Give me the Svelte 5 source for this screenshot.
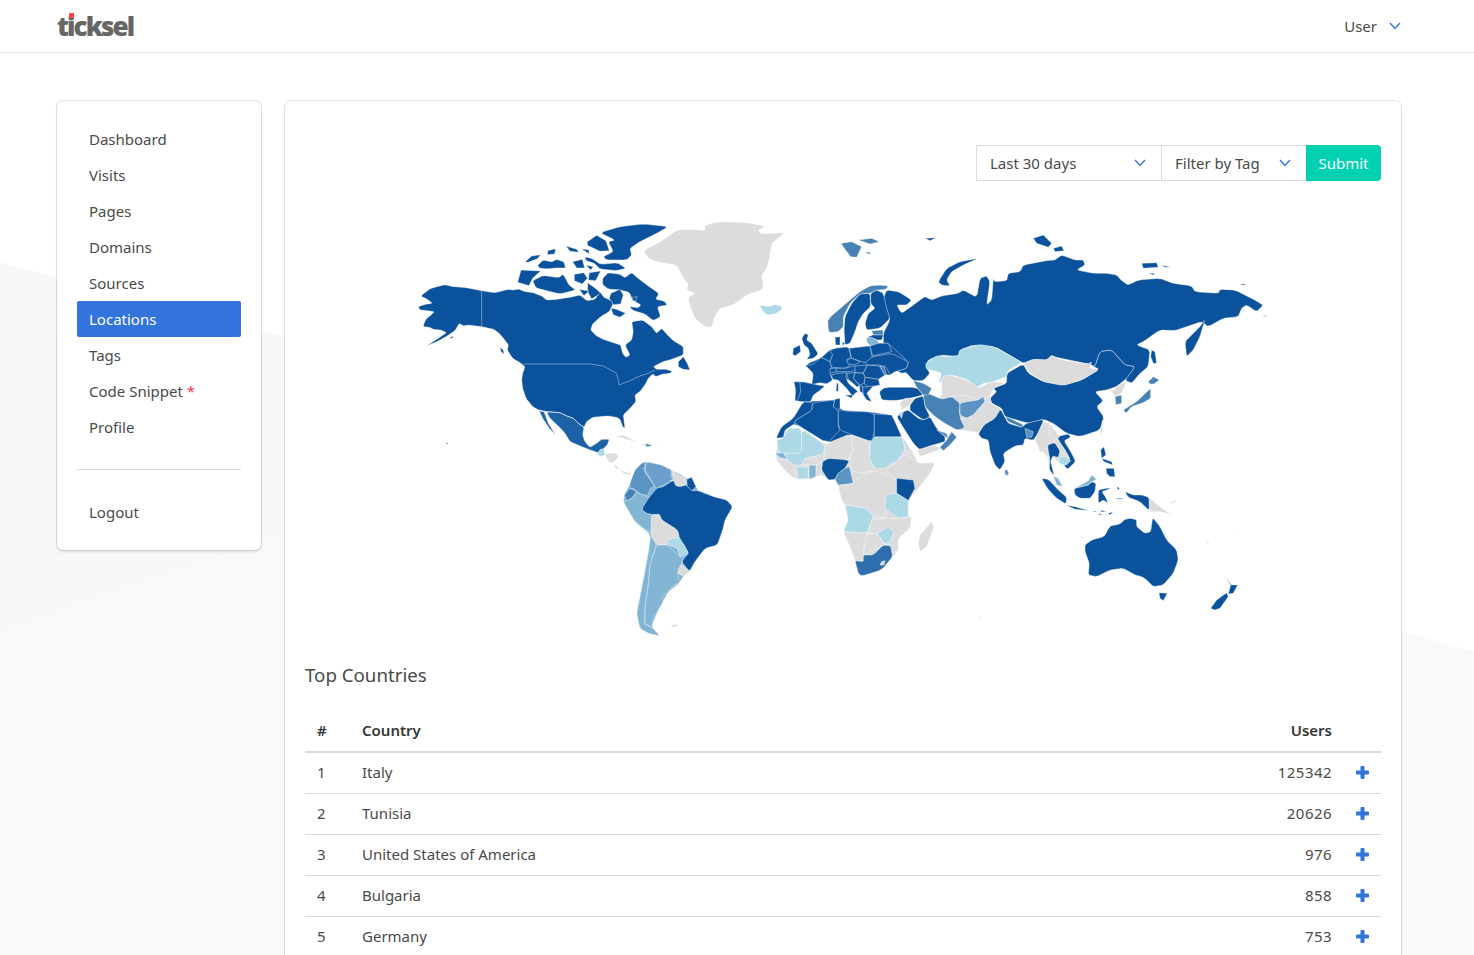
<script lang="ts">
	const colors = {
		d: '#0a529c',
		x: '#1d62a6',
		z: '#2e6ead',
		s: '#4682b4',
		m: '#5b93c3',
		v: '#6aa0cb',
		p: '#82b4d4',
		l: '#add8e6',
		g: '#dcdcdc'
	}

	// each region's points are in its own 3x grid, placed on the page at x,y
	const regions = [
		{
			x: 400, y: 210,
			shapes: [
				['g', '730,122 790,90 830,60 870,58 915,62 915,45 960,35 1040,38 1095,48 1075,62 1085,72 1155,68 1135,85 1115,100 1110,140 1100,175 1085,195 1090,225 1085,240 1040,255 1000,285 960,295 945,320 935,352 915,350 885,325 868,285 865,262 885,250 860,240 865,222 850,205 830,165 770,155 745,145'],
				['l', '1078,285 1105,290 1125,283 1145,290 1145,300 1125,312 1100,315 1090,305'],
				['d', '245,242 215,236 190,232 160,230 135,224 110,230 90,236 62,258 82,268 97,280 75,283 55,290 60,300 80,302 103,305 90,318 80,325 72,340 70,350 88,352 100,358 122,360 140,368 125,378 100,395 78,408 105,398 135,382 165,362 178,340 190,348 205,345 245,350 265,355 280,358 295,368 310,385 325,405 322,420 338,445 360,458 375,470 368,490 365,510 368,535 378,565 398,590 415,600 440,605 480,608 500,618 520,625 535,640 552,652 560,635 578,622 600,620 625,618 650,622 660,628 668,650 675,655 672,630 670,615 690,595 708,575 705,555 720,545 738,520 745,505 758,492 768,500 790,492 810,490 782,505 800,495 818,485 800,478 770,478 760,470 790,455 815,448 850,435 850,410 820,392 800,372 785,355 770,370 755,350 728,330 695,335 700,365 695,390 675,405 690,435 678,442 668,430 662,405 640,398 615,390 590,378 572,360 578,342 602,320 628,305 640,280 630,270 612,262 600,245 585,268 560,272 540,255 510,262 470,268 440,270 425,258 400,248 375,245 355,237 340,240 325,238 285,248'],
				['d', '600,68 660,50 730,42 805,50 770,70 720,95 690,115 695,135 680,150 620,150 610,140 640,125 625,95 645,90'],
				['d', '562,95 590,76 618,92 628,122 600,124 562,106'],
				['d', '498,108 530,118 537,127 510,124'],
				['d', '545,116 567,120 567,132'],
				['d', '375,156 395,138 422,134 412,146 385,157'],
				['d', '443,122 467,116 464,132 443,134'],
				['d', '413,166 430,150 455,156 470,148 492,156 497,174 465,174 440,177 418,174'],
				['d', '518,155 547,148 554,174 530,174'],
				['d', '555,140 577,146 602,163 652,158 678,175 650,182 600,177 583,160 558,152'],
				['d', '558,165 580,170 572,180'],
				['d', '363,180 422,183 398,205 387,227 353,217'],
				['d', '398,212 430,196 475,203 490,193 507,225 527,240 480,252 440,242 408,234'],
				['d', '523,193 552,188 562,205 547,222 523,212'],
				['d', '568,188 602,183 587,212 565,210'],
				['d', '608,205 625,188 660,193 675,203 695,188 712,203 742,226 777,250 767,268 792,273 802,285 772,290 782,320 760,332 735,312 700,302 688,290 715,293 723,285 698,270 688,247 660,240 625,237 608,224'],
				['d', '633,250 660,238 670,255 662,282 640,284 628,265'],
				['d', '698,262 712,260 708,272 698,272'],
				['d', '633,295 650,298 677,310 660,322 640,314'],
				['d', '563,218 590,238 602,250 575,267 563,245'],
				['d', '538,238 567,243 552,257'],
				['d', '835,455 850,440 862,460 870,480 850,478 835,470'],
				['d', '300,412 310,420 312,432 303,425'],
				['d', '150,382 162,378 155,386'],
				['d', '138,698 143,699 143,703 139,703'],
				['x', '440,606 480,608 500,618 520,625 535,640 552,652 548,675 555,695 570,712 590,700 605,688 628,688 622,705 610,716 600,730 585,725 565,718 540,708 510,695 495,670 475,648 450,625'],
				['x', '418,603 432,605 445,640 467,675 448,655 428,625']
			],
			lines: [
				'245,242 245,350 265,355 280,358 295,368 310,385 325,405',
				'372,462 570,462 610,468 650,490 658,525 690,512 720,498 745,490 765,480',
				'415,600 440,605 480,608 500,618 520,625 535,640 552,652'
			]
		},
		{
			x: 580, y: 425,
			shapes: [
				['l', '52,85 62,72 72,72 75,90 60,95'],
				['g', '75,88 85,85 108,85 115,95 105,108 90,115 80,100'],
				['l', '100,118 108,122 118,135 108,130'],
				['g', '118,132 130,138 148,145 155,142 150,150 130,145'],
				['g', '105,33 130,30 150,40 165,48 178,55 155,47 130,40'],
				['s', '198,55 218,62 198,66'],
				['g', '185,58 198,55 198,66'],
				['l', '150,64 160,66 152,67'],
				['g', '228,64 238,65 230,66']
			]
		},
		{
			x: 580, y: 420,
			shapes: [
				// South America base
				['p', '150,190 165,150 185,130 200,125 275,150 325,175 348,200 355,212 400,230 440,240 458,260 435,300 428,330 412,375 375,385 345,425 328,455 310,468 298,490 265,515 235,570 215,620 240,648 205,640 180,625 170,580 178,540 205,400 212,345 165,305 130,245 133,225'],
				['m', '150,190 165,150 185,130 200,125 190,150 225,200 210,205 205,225 185,225 160,205 150,205'],
				['v', '200,125 245,135 275,150 272,170 280,180 250,195 230,205 225,200 195,150'],
				['g', '275,150 295,165 325,175 318,195 300,200 285,198 270,182 280,180'],
				['d', '320,178 335,172 348,200 335,212 322,200'],
				['s', '133,225 150,205 170,215 155,235 140,243'],
				['p', '130,245 140,243 155,235 170,218 190,225 210,235 185,268 200,280 215,285 215,340 190,325 165,305 150,280'],
				['d', '185,268 205,235 230,205 250,200 280,180 288,198 300,200 318,195 335,212 355,212 400,230 440,240 458,260 435,300 428,330 412,375 375,385 345,425 328,455 305,425 325,400 315,378 298,355 292,330 245,300 238,285 215,283 200,280'],
				['g', '215,285 238,282 245,300 292,330 298,352 265,358 262,375 230,375 212,345'],
				['l', '265,358 298,352 325,400 300,412 292,385 265,375'],
				['g', '295,440 305,432 330,455 310,468 292,460'],
				['p', '230,375 262,375 300,412 310,405 305,430 292,455 298,490 280,495 265,515 245,530 250,545 235,570 222,590 215,620 195,612 195,560 205,490 210,430'],
				['p', '212,345 230,375 210,430 205,490 195,560 192,612 215,622 240,648 205,640 180,625 170,580 178,540 188,490 205,400'],
				['g', '275,615 292,612 290,620 275,620'],
				// Africa, grey base first so the countries on it leave no gaps
				['g', '588,100 600,60 620,25 735,75 815,45 882,50 968,50 1000,100 1015,130 1065,128 1050,160 1015,205 985,240 985,290 995,290 990,325 955,355 955,390 938,410 905,450 845,468 835,460 825,422 810,380 790,335 805,300 795,255 785,240 775,200 765,178 745,180 725,165 688,178 655,178 630,165 610,145 590,120'],
				['l', '590,60 610,55 625,25 665,25 665,100 608,100 595,95'],
				['l', '665,25 735,75 730,100 700,110 675,115 665,135 640,135 620,120 615,100 665,100'],
				['p', '585,100 610,98 622,118 598,112'],
				['g', '590,120 622,118 640,135 650,178 630,165 610,145'],
				['l', '650,140 685,142 685,175 655,178'],
				['p', '687,135 708,135 708,170 688,178'],
				['g', '710,135 725,130 725,165 708,170'],
				['g', '665,135 675,115 700,110 725,125 710,135'],
				['g', '735,75 790,48 815,45 818,90 805,122 745,115 728,115 735,100'],
				['g', '815,45 868,70 870,110 885,150 845,160 815,152 808,122 818,90'],
				['d', '728,125 745,115 785,118 808,122 795,145 775,160 765,178 745,180 725,150'],
				['m', '765,178 775,160 795,145 808,140 820,190 775,195'],
				['l', '882,50 968,50 975,90 950,125 935,130 915,145 885,145 870,120 870,70'],
				['g', '968,50 1000,100 975,95'],
				['g', '950,125 975,100 1015,130 1065,128 1050,160 1015,205 985,240 1000,180 950,180 915,150'],
				['g', '885,150 950,180 948,220 915,265 915,295 880,290 860,265 795,255 785,240 775,200 820,190 835,175'],
				['d', '950,175 1000,180 1005,205 985,242 950,220'],
				['l', '918,225 950,220 985,242 985,290 955,295 915,265'],
				['l', '795,255 860,265 880,290 875,300 862,340 790,335 805,300'],
				['g', '862,340 875,300 915,295 955,295 995,290 990,325 955,355 955,390 925,405 932,375 915,372 890,340'],
				['l', '890,340 925,322 942,335 930,365 915,372'],
				['g', '790,335 862,340 895,345 850,375 850,425 825,422 810,380'],
				['g', '860,345 890,340 915,372 895,385 850,405'],
				['z', '850,405 880,405 910,375 932,378 938,410 905,450 845,468 835,460 825,422 850,425'],
				['g', '905,425 915,422 912,435 900,435'],
				['g', '1020,345 1055,305 1062,320 1040,380 1020,395 1015,370']
			]
		},
		{
			x: 760, y: 210,
			shapes: [
				['d', '380,240 415,245 455,270 440,285 410,285 425,310 460,285 480,270 495,260 515,270 545,258 595,250 610,240 650,262 660,205 680,198 690,215 680,285 695,270 700,205 705,215 740,212 745,190 780,185 790,165 860,152 885,150 905,135 945,150 970,150 975,165 950,180 1000,190 1040,190 1070,195 1085,212 1105,225 1135,210 1200,205 1240,220 1295,228 1305,245 1375,250 1380,238 1425,240 1480,268 1510,285 1490,305 1460,285 1445,295 1435,320 1390,325 1345,350 1325,335 1265,355 1245,362 1200,360 1150,395 1130,405 1170,420 1165,470 1140,490 1115,520 1095,510 1125,470 1095,465 1055,420 1020,425 1005,470 985,462 880,440 860,450 820,448 790,460 765,445 705,410 640,405 600,420 595,440 545,435 505,450 497,470 510,490 490,512 460,512 438,487 425,490 390,470 385,440 370,405 370,370 390,330 380,300 370,265'],
				['d', '1275,395 1300,370 1320,350 1335,328 1320,380 1300,420 1280,440'],
				['d', '1175,420 1185,425 1190,460 1180,460 1172,440'],
				['d', '535,215 560,175 600,155 655,145 610,165 575,185 560,210 570,228 545,225'],
				['d', '820,85 850,75 875,100 865,112 830,100'],
				['d', '880,115 905,108 912,122 885,125'],
				['d', '1145,160 1190,158 1195,172 1150,175'],
				['d', '1205,165 1232,172 1215,172'],
				['d', '1165,190 1185,190 1180,195'],
				['d', '1440,222 1460,222 1450,226'],
				['d', '1510,316 1525,320 1512,319'],
				['d', '495,85 528,83 510,92'],
				['s', '243,100 275,95 305,110 290,142 272,140 255,118'],
				['s', '295,90 335,85 358,95 330,102'],
				['s', '315,125 335,128 325,133'],
				['d', '790,462 805,490 850,515 910,525 965,510 1018,478 990,465 1005,470 1020,425 1055,420 1095,465 1125,470 1100,505 1070,530 1040,540 1005,545 1030,572 1010,590 1032,622 1020,660 960,680 920,670 880,640 850,628 805,640 770,630 735,620 725,595 695,580 690,565 710,545 700,535 740,520 740,490'],
				['g', '790,460 820,448 860,450 875,435 905,450 985,462 995,455 990,475 1018,478 965,510 910,527 850,515 810,490'],
				['g', '1055,545 1075,525 1100,515 1085,550 1065,560'],
				['s', '1065,560 1085,555 1085,580 1068,585'],
				['s', '1090,600 1130,575 1158,548 1172,535 1172,565 1150,578 1115,590 1098,610'],
				['s', '1165,515 1180,500 1198,510 1182,522 1170,522'],
				['g', '1028,630 1030,640 1022,680 1020,668'],
				['l', '497,460 530,437 555,440 595,437 600,420 660,403 705,412 765,445 785,458 745,480 740,500 700,515 670,520 650,535 625,510 575,495 560,500 535,520 545,490 515,480 500,478'],
				// grey base behind Central and South Asia
				['g', '490,555 545,565 545,505 560,495 650,535 695,518 702,535 690,562 695,580 725,598 705,625 670,645 660,668 590,660 555,640 495,590'],
				['g', '545,505 560,495 590,500 630,515 655,535 695,515 735,518 700,535 690,560 655,570 615,555 575,560 545,565'],
				['s', '490,555 505,550 545,568 575,560 600,580 598,615 615,655 590,660 555,640 525,620 495,590'],
				['m', '600,580 620,575 655,570 670,560 675,575 640,615 620,625 600,615'],
				['g', '640,615 675,575 695,580 725,598 705,625 670,645 660,668 605,660 615,650 600,625 620,625'],
				['d', '358,545 375,532 470,532 490,555 450,565 405,572 365,570'],
				['s', '460,512 490,520 515,535 505,555 490,555 470,532'],
				['d', '445,600 475,625 490,630 510,620 530,655 555,680 555,695 520,705 480,720 460,700 425,645 410,620 430,605'],
				['d', '465,565 490,558 495,590 510,620 490,630 450,602 450,585'],
				['g', '420,580 435,565 465,565 450,585 425,600'],
				['l', '415,610 430,605 425,625'],
				['g', '472,720 520,705 545,715 530,722 480,740'],
				['m', '530,660 560,670 565,685 555,680'],
				['s', '540,712 560,690 575,665 590,682 570,705 550,722'],
				['d', '655,672 672,645 705,625 722,597 735,622 745,640 785,652 800,640 852,628 838,665 822,688 815,690 795,685 790,705 765,708 730,730 735,755 720,780 705,765 690,725 685,690 665,685'],
				['s', '735,620 750,625 790,645 785,652 745,635'],
				['m', '795,655 820,665 815,682 800,682'],
				// North Africa base
				['d', '48,685 65,650 100,625 130,575 225,570 240,565 240,600 320,605 395,615 425,680 343,680 335,695 270,672 202,700 105,640 75,660 70,682'],
				['d', '48,685 65,650 100,625 130,575 158,578 155,602 105,632 105,640 75,660 70,682'],
				['d', '158,578 225,570 220,590 235,600 235,650 240,660 202,700 105,640 105,632 155,602'],
				['d', '225,568 240,565 240,595 232,600 220,590'],
				['d', '240,600 275,605 320,605 343,612 343,665 335,695 270,672 240,660 235,640 235,605'],
				['d', '343,612 395,615 405,635 425,680 343,680']
			]
		},
		{
			x: 780, y: 280,
			shapes: [
				// dark base under the mainland countries
				['d', '75,255 125,232 150,210 208,205 270,198 295,190 325,190 385,245 380,265 345,275 330,285 315,285 295,298 300,315 280,318 260,340 275,365 250,345 238,318 205,298 158,298 150,282'],
				['s', '143,118 210,60 240,35 270,18 300,15 325,18 318,28 290,30 270,40 240,42 210,70 190,110 190,140 175,155 150,158 145,150'],
				['d', '192,150 195,110 215,70 240,42 270,40 272,80 250,100 235,125 225,155 210,190 195,195'],
				['d', '272,40 290,30 310,40 320,85 330,115 300,145 260,150 255,130 265,100 285,85 272,70'],
				['s', '275,152 308,150 310,165 280,165'],
				['d', '262,172 278,165 310,165 305,180 292,180'],
				['p', '258,175 275,172 292,180 298,192 278,205 262,188'],
				['d', '75,160 85,165 80,180 95,190 115,222 100,235 80,238 90,225 85,205 72,195 65,175'],
				['d', '40,205 60,195 62,215 45,228 38,222'],
				['d', '165,172 180,170 180,195 167,195'],
				['d', '188,185 195,190 188,198'],
				['d', '75,255 95,255 108,245 125,232 150,245 155,262 150,282 158,300 140,312 118,308 95,315 100,280'],
				['d', '125,232 150,210 165,205 158,225 150,245'],
				['d', '42,305 65,305 115,315 135,318 115,335 100,345 92,365 65,365 45,362 47,330'],
				['d', '42,305 60,306 62,335 52,362 45,362 47,330'],
				['d', '150,212 165,205 205,200 213,230 200,240 212,255 195,265 155,262 150,245 158,225'],
				['d', '208,205 270,198 278,240 255,248 215,235'],
				['d', '200,240 215,235 240,245 225,255 205,252'],
				['d', '165,265 195,265 222,258 235,262 215,275 170,275'],
				['d', '150,265 170,265 168,275 150,280'],
				['d', '155,285 170,280 200,278 198,292 205,310 235,335 225,340 218,350 200,325 175,300 158,298'],
				['d', '170,310 175,310 175,335 168,332'],
				['d', '195,345 218,345 215,355'],
				['d', '225,258 262,255 250,280 225,278'],
				['d', '262,255 298,258 315,285 295,298 255,292 250,280'],
				['d', '278,230 335,220 385,245 380,265 345,275 330,285 320,262 298,255 262,255 255,248'],
				['s', '300,258 312,260 320,285 312,283'],
				['d', '270,198 295,190 325,190 335,215 278,228'],
				['d', '255,292 295,298 300,315 265,322 252,310'],
				['d', '225,278 250,280 255,292 252,310 240,315 220,295'],
				['d', '200,280 225,278 220,295 240,318 230,320 205,298'],
				['d', '238,318 248,318 250,340 240,335'],
				['d', '248,322 280,318 260,340 275,365 260,360 250,345']
			]
		},
		{
			x: 960, y: 420,
			shapes: [
				// grey base for Indochina
				['g', '225,60 250,5 268,10 298,48 325,42 332,52 312,62 335,100 347,125 322,148 312,135 300,132 278,108 272,125 278,148 282,168 268,148 262,110 248,95 240,95 235,80'],
				['g', '225,60 250,5 268,10 270,50 280,60 262,72 262,100 272,135 262,110 248,95 240,95 235,80'],
				['m', '135,148 142,150 147,162 140,167 134,160'],
				['d', '262,75 285,68 300,92 295,112 278,108 272,125 278,148 282,168 268,148 270,120'],
				['d', '298,48 325,42 332,52 312,62 335,100 347,125 322,148 312,135 330,118 318,95 305,75 292,62'],
				['g', '280,62 295,58 305,75 318,95 330,118 318,112 300,92 288,72'],
				['l', '295,115 315,108 332,122 320,135 300,132'],
				['p', '280,168 295,175 308,200 290,195'],
				['d', '342,205 385,195 395,185 408,190 405,215 390,235 360,235 345,225'],
				['p', '345,205 385,182 395,165 410,178 395,185 385,195'],
				['d', '245,175 265,178 295,210 320,232 318,252 290,235 262,205'],
				['d', '318,255 345,260 388,272 345,268'],
				['d', '415,210 440,205 455,205 425,215 435,228 445,250 430,240 415,250'],
				['d', '422,90 432,80 438,105 425,115'],
				['d', '438,145 462,145 465,170 450,170 440,160'],
				['d', '425,115 455,125 458,135 432,125'],
				['g', '567,232 600,260 635,285 605,275 570,275'],
				['d', '495,215 520,225 545,225 567,232 568,272 540,245 505,232'],
				['d', '472,200 480,205 472,210'],
				['d', '462,235 495,235 480,238'],
				['d', '400,272 412,275 402,276'],
				['d', '420,270 440,275 425,276'],
				['d', '415,280 430,285 418,285'],
				['d', '445,280 460,275 450,285'],
				['d', '375,375 395,360 432,350 450,318 480,312 495,298 512,295 530,300 530,320 555,340 572,335 578,292 600,320 620,360 650,390 655,420 640,460 610,495 580,500 560,480 545,470 525,465 490,445 450,450 410,470 385,465 388,430 375,395'],
				['d', '597,518 622,520 610,542 600,535'],
				['d', '795,468 815,495 833,495 820,520 805,522 812,495'],
				['d', '752,565 770,540 800,518 805,530 780,565 765,570'],
				['g', '735,360 752,372 742,370'],
				['g', '625,250 650,240 640,250'],
				['g', '830,340 840,338 832,342'],
				['g', '56,590 66,592 60,597']
			]
		}
	]

	// cut the corners of the larger shapes so coasts don't look faceted
	function smooth(points: string) {
		const pts = points.split(' ').map((p) => p.split(',').map(Number))
		if (pts.length < 7) return points
		const cut = 0.14
		const out: string[] = []
		pts.forEach((a, i) => {
			const b = pts[(i + 1) % pts.length]
			out.push(`${a[0] + (b[0] - a[0]) * cut},${a[1] + (b[1] - a[1]) * cut}`)
			out.push(`${a[0] + (b[0] - a[0]) * (1 - cut)},${a[1] + (b[1] - a[1]) * (1 - cut)}`)
		})
		return out.join(' ')
	}

	const menu = ['Dashboard', 'Visits', 'Pages', 'Domains', 'Sources', 'Locations', 'Tags', 'Code Snippet', 'Profile']

	const countries = [
		{ name: 'Italy', users: 125342 },
		{ name: 'Tunisia', users: 20626 },
		{ name: 'United States of America', users: 976 },
		{ name: 'Bulgaria', users: 858 },
		{ name: 'Germany', users: 753 }
	]
</script>

<div class="page">
	<div class="backdrop"></div>

	<header class="navbar">
		<a class="logo" href="#top">ticksel<span class="logo-dot"></span></a>
		<a class="user" href="#top">
			User
			<svg class="chevron" viewBox="0 0 12 8"><polyline points="1,1 6,6.5 11,1" /></svg>
		</a>
	</header>

	<div class="layout">
		<aside class="card side">
			<ul class="menu">
				{#each menu as item}
					<li>
						<a href="#top" class:active={item === 'Locations'}>
							{item}{#if item === 'Code Snippet'}<span class="req">*</span>{/if}
						</a>
					</li>
				{/each}
			</ul>
			<hr />
			<ul class="menu">
				<li><a href="#top">Logout</a></li>
			</ul>
		</aside>

		<main class="card content">
			<form class="filters">
				<div class="select first">
					Last 30 days
					<svg class="chevron" viewBox="0 0 12 8"><polyline points="1,1 6,6.5 11,1" /></svg>
				</div>
				<div class="select second">
					Filter by Tag
					<svg class="chevron" viewBox="0 0 12 8"><polyline points="1,1 6,6.5 11,1" /></svg>
				</div>
				<button type="button" class="submit">Submit</button>
			</form>

			<svg class="map" viewBox="305 205 1076 440">
				{#each regions as region}
					<g transform="translate({region.x} {region.y}) scale(0.3333)">
						{#each region.shapes as shape}
							<polygon points={smooth(shape[1])} fill={colors[shape[0]]} />
						{/each}
						{#each region.lines ?? [] as line}
							<polyline class="border" points={line} />
						{/each}
					</g>
				{/each}
			</svg>

			<h2>Top Countries</h2>

			<table>
				<thead>
					<tr>
						<th class="rank">#</th>
						<th>Country</th>
						<th class="num">Users</th>
						<th class="action"></th>
					</tr>
				</thead>
				<tbody>
					{#each countries as country, i}
						<tr>
							<td class="rank">{i + 1}</td>
							<td>{country.name}</td>
							<td class="num count">{country.users}</td>
							<td class="action">
								<svg class="plus" viewBox="0 0 13 13">
									<rect x="0" y="4.5" width="13" height="4" rx="1" />
									<rect x="4.5" y="0" width="4" height="13" rx="1" />
								</svg>
							</td>
						</tr>
					{/each}
				</tbody>
			</table>
		</main>
	</div>
</div>

<style>
	:global(body) {
		background: #fff;
		font-family: 'Noto Sans', sans-serif;
		font-size: 15px;
		color: #4a4a4a;
	}

	.page {
		position: relative;
		height: 100vh;
		overflow: hidden;
	}

	.backdrop {
		position: absolute;
		inset: 0;
		background: #f6f8f9;
		clip-path: polygon(0 262px, 100% 651px, 100% 100%, 0 100%);
	}

	.backdrop::after {
		content: '';
		position: absolute;
		inset: 0;
		background: rgba(255, 255, 255, 0.2);
		clip-path: polygon(0 633px, 100% 117px, 100% 100%, 0 100%);
	}

	a {
		color: inherit;
		text-decoration: none;
	}

	.navbar {
		position: relative;
		display: flex;
		align-items: center;
		justify-content: space-between;
		height: 52px;
		padding: 0 73px 0 57px;
		background: #fff;
		border-bottom: 1px solid #e8e8e8;
	}

	.logo {
		position: relative;
		font-family: 'Open Sans', sans-serif;
		font-size: 26px;
		font-weight: 800;
		letter-spacing: -1.9px;
		color: #666;
		line-height: 1;
	}

	.logo-dot {
		position: absolute;
		left: 12px;
		top: 0;
		width: 5px;
		height: 5px;
		background: #f44;
	}

	.user {
		display: flex;
		align-items: center;
		gap: 12px;
	}

	.chevron {
		width: 12px;
		height: 8px;
		fill: none;
		stroke: #3273dc;
		stroke-width: 1.3;
	}

	.layout {
		position: relative;
		display: grid;
		grid-template-columns: 204px 1116px;
		gap: 24px;
		align-items: start;
		padding: 48px 0 0 57px;
	}

	.card {
		box-sizing: border-box;
		background: #fff;
		border-radius: 6px;
		box-shadow: 0 2px 3px rgba(10, 10, 10, 0.1), 0 0 0 1px rgba(10, 10, 10, 0.1);
	}

	.side {
		padding: 20px;
	}

	.menu {
		list-style: none;
		margin: 0;
		padding: 0;
	}

	.menu a {
		display: block;
		height: 36px;
		padding: 0 12px;
		line-height: 36px;
		border-radius: 2px;
	}

	.menu a.active {
		background: #3273dc;
		color: #fff;
	}

	.req {
		margin-left: 4px;
		color: #ff3860;
	}

	hr {
		height: 1px;
		margin: 24px 0;
		border: 0;
		background: #dbdbdb;
	}

	.content {
		padding: 44px 20px 20px 20px;
	}

	.filters {
		display: flex;
		justify-content: flex-end;
	}

	.select {
		box-sizing: border-box;
		display: flex;
		align-items: center;
		justify-content: space-between;
		height: 36px;
		padding: 0 15px 0 13px;
		border: 1px solid #dbdbdb;
		background: #fff;
	}

	.select.first {
		width: 186px;
	}

	.select.second {
		width: 145px;
		margin-left: -1px;
		border-right: 0;
		padding-right: 15px;
	}

	.submit {
		width: 75px;
		height: 36px;
		padding: 0;
		border: 0;
		border-radius: 0 4px 4px 0;
		background: #00d1b2;
		color: #fff;
		font: inherit;
	}

	.map {
		display: block;
		width: 1076px;
		height: 440px;
		margin-top: 24px;
	}

	.map polygon {
		stroke: #fff;
		stroke-width: 0.4;
		stroke-linejoin: round;
		vector-effect: non-scaling-stroke;
	}

	.map .border {
		fill: none;
		stroke: rgba(255, 255, 255, 0.65);
		stroke-width: 0.6;
		vector-effect: non-scaling-stroke;
	}

	h2 {
		margin: 15px 0 21px;
		font-size: 18.7px;
		font-weight: 400;
		line-height: 30px;
	}

	table {
		width: 100%;
		table-layout: fixed;
		border-collapse: collapse;
	}

	th,
	td {
		padding: 8px 12px 10px;
		line-height: 22px;
		text-align: left;
	}

	th {
		color: #363636;
		font-weight: 600;
		border-bottom: 2px solid #dbdbdb;
	}

	td {
		border-bottom: 1px solid #dbdbdb;
	}

	.rank {
		width: 21px;
	}

	.num {
		padding-right: 0;
		text-align: right;
	}

	.count {
		letter-spacing: 0.45px;
	}

	.action {
		width: 25px;
		text-align: right;
	}

	.plus {
		display: inline-block;
		width: 13px;
		height: 13px;
		vertical-align: -1px;
		fill: #3273dc;
	}
</style>
